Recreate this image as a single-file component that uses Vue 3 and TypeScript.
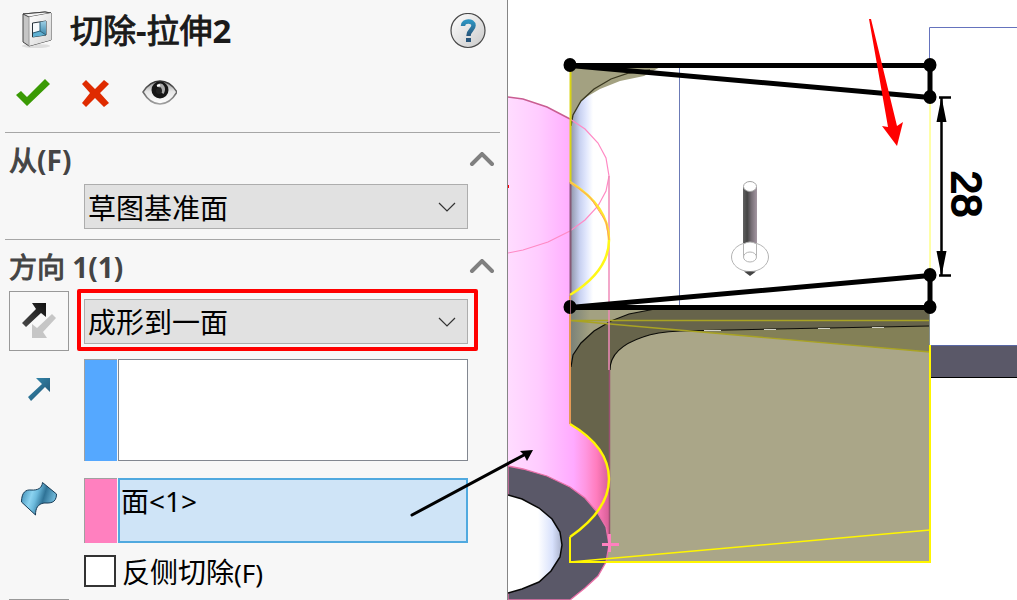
<script setup lang="ts">
import { ref } from 'vue'

interface SketchPoint {
  x: number
  y: number
}

const startCondition = ref('草图基准面')
const endCondition = ref('成形到一面')
const direction = ref('')
const face = ref('面<1>')
const flipSide = ref(false)
const fromOpen = ref(true)
const directionOpen = ref(true)

const points: SketchPoint[] = [
  { x: 570, y: 65 },
  { x: 930, y: 65 },
  { x: 930, y: 97 },
  { x: 930, y: 275 },
  { x: 930, y: 307 },
  { x: 570, y: 307 },
]
</script>

<template>
  <div class="app">
    <aside class="panel">
      <header class="head">
        <svg class="feature-icon" viewBox="0 0 36 42" aria-hidden="true">
          <defs>
            <linearGradient id="cutFront" x1="0" y1="0" x2="1" y2="1">
              <stop offset="0" stop-color="#ffffff" />
              <stop offset="1" stop-color="#d4d4d4" />
            </linearGradient>
            <linearGradient id="cutHole" x1="0" y1="0" x2="0" y2="1">
              <stop offset="0" stop-color="#9ed0e6" />
              <stop offset="1" stop-color="#3a86aa" />
            </linearGradient>
          </defs>
          <ellipse cx="18" cy="36" rx="14" ry="2" fill="#dedede" />
          <path d="M5 4 L27 2 L33 3 V30 L11 36 L5 32 Z" fill="#c6c6c6" stroke="#444444" stroke-linejoin="round" />
          <path d="M5 4 L27 2 L33 3 L11 7 Z" fill="#f4f4f4" stroke="#444444" stroke-linejoin="round" />
          <path d="M11 7 L33 3 V30 L11 36 Z" fill="url(#cutFront)" />
          <path d="M11 7 V36" stroke="#9a9a9a" />
          <path d="M14.500 13 L28 11 V25 L14.500 27 Z" fill="#f5f9fb" stroke="#26323a" />
          <path d="M22 12 L28 11 V25 L22 21 Z" fill="url(#cutHole)" />
          <path d="M15 23 L22 21 L28 25 L15 27 Z" fill="#5fb0d2" />
          <path d="M22 12 V21 L28 25 M22 21 L15 23" fill="none" stroke="#275b75" />
        </svg>
        <h1><span class="han">切除</span>-<span class="han">拉伸</span>2</h1>
        <button class="plain help" type="button" aria-label="帮助">
          <svg viewBox="0 0 36 36" aria-hidden="true">
            <defs>
              <linearGradient id="helpDisc" x1="0" y1="0" x2="1" y2="1">
                <stop offset="0" stop-color="#ffffff" />
                <stop offset="1" stop-color="#c9c9c9" />
              </linearGradient>
              <linearGradient id="helpMark" x1="0" y1="0" x2="0" y2="1">
                <stop offset="0" stop-color="#2d92bf" />
                <stop offset="1" stop-color="#28557a" />
              </linearGradient>
            </defs>
            <circle cx="18" cy="17.500" r="17" fill="url(#helpDisc)" stroke="#484848" stroke-width="1.200" />
            <path d="M13 13 C13 7 23.500 7 23.500 12.500 C23.500 17 18.500 17 18.500 23" fill="none" stroke="url(#helpMark)" stroke-width="4.500" />
            <rect x="16" y="25" width="5" height="4" fill="#28557a" />
          </svg>
        </button>
      </header>

      <div class="actions">
        <button class="plain" type="button" aria-label="确定">
          <svg viewBox="0 0 36 36" aria-hidden="true">
            <path d="M1 20 L6 16 L12 22 L30 4 L35 9 L12 31 Z" fill="#3a9a04" />
          </svg>
        </button>
        <button class="plain" type="button" aria-label="取消">
          <svg viewBox="0 0 36 36" aria-hidden="true">
            <path d="M4 9 L8 5 L17 14 L26 5 L31 9 L22 18 L31 28 L26 32 L17 23 L8 32 L4 28 L12 18 Z" fill="#df2b00" />
          </svg>
        </button>
        <button class="plain" type="button" aria-label="预览">
          <svg viewBox="0 0 36 36" aria-hidden="true">
            <defs>
              <linearGradient id="eyeWhite" x1="0" y1="0" x2="0" y2="1">
                <stop offset="0" stop-color="#8a8a8a" />
                <stop offset="0.45" stop-color="#e6e6e6" />
                <stop offset="1" stop-color="#ffffff" />
              </linearGradient>
              <linearGradient id="eyeRim" x1="0" y1="0" x2="0" y2="1">
                <stop offset="0" stop-color="#333333" />
                <stop offset="1" stop-color="#a0a0a0" />
              </linearGradient>
            </defs>
            <path d="M2 17 Q9 6 19 6 Q29 6 36 17 Q29 29 19 29 Q9 29 2 17 Z" fill="url(#eyeWhite)" stroke="url(#eyeRim)" stroke-width="1.500" />
            <circle cx="19" cy="15" r="8.500" fill="#161616" />
            <path d="M17 11 C21 9 24 13 21 18" fill="none" stroke="#a8a8a8" stroke-width="3.500" />
            <circle cx="18" cy="16" r="3" fill="#222222" />
            <path d="M16 11 L19 10" stroke="#ffffff" stroke-width="2" />
          </svg>
        </button>
      </div>

      <section class="group">
        <div class="group-head">
          <h2><span class="han">从</span>(F)</h2>
          <button class="plain fold" type="button" aria-label="折叠 从" @click="fromOpen = !fromOpen">
            <svg viewBox="0 0 26 16" aria-hidden="true">
              <path d="M3 12 L13 2 L23 12" fill="none" stroke="#808080" stroke-width="4" stroke-linecap="round" />
            </svg>
          </button>
        </div>
        <div v-if="fromOpen" class="row">
          <div class="combo">
            <select v-model="startCondition" aria-label="起始条件">
              <option>草图基准面</option>
            </select>
            <svg class="caret" viewBox="0 0 18 10" aria-hidden="true">
              <path d="M1 1 L9 9 L17 1" fill="none" stroke="#333333" stroke-width="1.200" />
            </svg>
          </div>
        </div>
      </section>

      <section class="group">
        <div class="group-head">
          <h2><span class="han">方向</span> 1(1)</h2>
          <button class="plain fold" type="button" aria-label="折叠 方向 1" @click="directionOpen = !directionOpen">
            <svg viewBox="0 0 26 16" aria-hidden="true">
              <path d="M3 12 L13 2 L23 12" fill="none" stroke="#808080" stroke-width="4" stroke-linecap="round" />
            </svg>
          </button>
        </div>
        <div v-if="directionOpen" class="fields">
          <div class="row">
            <button class="reverse" type="button" aria-label="反向">
              <svg viewBox="0 0 40 40" aria-hidden="true">
                <defs>
                  <linearGradient id="revDark" x1="0" y1="1" x2="1" y2="0">
                    <stop offset="0" stop-color="#4b4b4b" />
                    <stop offset="1" stop-color="#111111" />
                  </linearGradient>
                </defs>
                <path d="M3 22 L17 8 L13 2 H27 V16 L22 12 L7 26 Z" fill="url(#revDark)" />
                <path d="M33 13 L37 17 L24 31 L28 37 H13 V23 L18 27 Z" fill="#c6c6c6" />
              </svg>
            </button>
            <div class="combo marked">
              <select v-model="endCondition" aria-label="终止条件">
                <option>成形到一面</option>
              </select>
              <svg class="caret" viewBox="0 0 18 10" aria-hidden="true">
                <path d="M1 1 L9 9 L17 1" fill="none" stroke="#333333" stroke-width="1.200" />
              </svg>
            </div>
          </div>

          <div class="row top">
            <label class="lead" for="direction" aria-label="拉伸方向">
              <svg viewBox="0 0 60 60" aria-hidden="true">
                <defs>
                  <linearGradient id="dirBlue" x1="0" y1="0" x2="1" y2="1">
                    <stop offset="0" stop-color="#3690b6" />
                    <stop offset="1" stop-color="#214f6d" />
                  </linearGradient>
                </defs>
                <path d="M19 38 L33 25 L27 19 H41 V33 L36 28 L22 42 Z" fill="url(#dirBlue)" />
              </svg>
            </label>
            <div class="picker">
              <span class="swatch blue"></span>
              <textarea id="direction" v-model="direction" class="tall"></textarea>
            </div>
          </div>

          <div class="row top">
            <label class="lead" for="face" aria-label="面/平面">
              <svg viewBox="0 0 60 60" aria-hidden="true">
                <defs>
                  <linearGradient id="surfBlue" gradientUnits="userSpaceOnUse" x1="14" y1="16" x2="46" y2="26">
                    <stop offset="0" stop-color="#4f9cc2" />
                    <stop offset="0.25" stop-color="#8cd3f0" />
                    <stop offset="0.4" stop-color="#6dbbdd" />
                    <stop offset="0.62" stop-color="#2f7397" />
                    <stop offset="1" stop-color="#7cc5e5" />
                  </linearGradient>
                </defs>
                <path d="M33.500 4.500 L47.500 16 C47.500 26 40 25 35 25 C29 26 26.500 30 26.500 37 L12.500 24 C12.500 14 17 11.500 22 12 C29 12.500 33 10 33.500 4.500 Z" fill="url(#surfBlue)" stroke="#173b56" stroke-linejoin="round" />
              </svg>
            </label>
            <div class="picker">
              <span class="swatch pink"></span>
              <textarea id="face" v-model="face" class="active"></textarea>
            </div>
          </div>

          <label class="check">
            <input v-model="flipSide" type="checkbox" />
            <span>反侧切除<span class="key">(F)</span></span>
          </label>

          <button class="reverse draft" type="button" aria-label="拔模开/关"></button>
        </div>
      </section>
    </aside>

    <main class="stage">
      <svg class="model" viewBox="508 0 509 600" preserveAspectRatio="xMinYMin meet" role="img" aria-label="模型视图">
        <defs>
          <linearGradient id="pinkBody" gradientUnits="userSpaceOnUse" x1="508" y1="0" x2="609" y2="0">
            <stop offset="0" stop-color="#ffdcff" />
            <stop offset="0.3" stop-color="#ffccff" />
            <stop offset="0.65" stop-color="#ffaaff" />
            <stop offset="0.77" stop-color="#ff96e0" />
            <stop offset="0.88" stop-color="#ff7cbd" />
            <stop offset="1" stop-color="#d85e96" />
          </linearGradient>
          <linearGradient id="fillet" gradientUnits="userSpaceOnUse" x1="571" y1="0" x2="593" y2="0">
            <stop offset="0" stop-color="#9298ad" />
            <stop offset="0.4" stop-color="#c8d1f1" />
            <stop offset="0.7" stop-color="#e2e8fd" />
            <stop offset="1" stop-color="#ffffff" />
          </linearGradient>
          <linearGradient id="filletShade" gradientUnits="userSpaceOnUse" x1="571" y1="0" x2="590" y2="0">
            <stop offset="0" stop-color="#7b8278" />
            <stop offset="1" stop-color="#a3a181" />
          </linearGradient>
          <linearGradient id="bore" gradientUnits="userSpaceOnUse" x1="538" y1="0" x2="562" y2="0">
            <stop offset="0" stop-color="#ffffff" />
            <stop offset="0.6" stop-color="#d8e1fc" />
            <stop offset="1" stop-color="#a8b0ca" />
          </linearGradient>
          <linearGradient id="pin" x1="0" y1="0" x2="1" y2="0">
            <stop offset="0" stop-color="#626262" />
            <stop offset="0.3" stop-color="#444444" />
            <stop offset="0.6" stop-color="#766e75" />
            <stop offset="1" stop-color="#a497a2" />
          </linearGradient>
        </defs>

        <!-- fillet and upper corner -->
        <rect x="571" y="70" width="23" height="238" fill="url(#fillet)" />
        <path d="M570 66 H662 L644 76 L620 81 L600 89 L588 96 L581 101 L573 115 L571 126 Z" fill="#a3a181" />
        <path d="M571 126 L573 115 L581 101 L594 89 L611 79 L629 73 L650 70" fill="none" stroke="#39371f" stroke-width="1.300" />
        <path d="M679.500 68 V305" stroke="#6b7ab6" />

        <!-- solid body -->
        <path d="M570 308 H930 V562 H570 Z" fill="#aaa688" />
        <path d="M570 309 H655 L629 314 L611 321 L594 331 L581 343 L573 355 L571 367 Z" fill="url(#filletShade)" />
        <path d="M571 485 V367 L573 355 L581 343 L594 331 L611 321 L629 314 L655 309 H930 V326 L775 329 L680 331 Q656 332 643 337 Q610 348 610 370 V485 Z" fill="#67644b" />
        <path d="M680 331 L775 329 L930 326 V352 L680 330 Z" fill="#838057" />
        <path d="M571 367 L573 355 L581 343 L594 331 L611 321 L629 314 L655 309 M610 370 Q610 348 643 337 Q656 332 680 331 L775 329 L930 326" fill="none" stroke="#0c0c08" stroke-width="1.200" />
        <path d="M704 330.500 H721 M764 329.500 H776 M818 328.500 H830 M872 327.500 H884" stroke="#d0d0c4" />
        <path d="M570 320.500 H930 M570 320.500 L930 352" fill="none" stroke="#a9a323" stroke-width="1.300" />

        <!-- side plate and outline behind -->
        <rect x="931" y="346" width="90" height="31" fill="#5a5868" />
        <path d="M931 345.500 H1020" stroke="#5967a4" />
        <path d="M931 377.500 H1020" stroke="#000000" />
        <path d="M929.500 65 V27.500 H1020" fill="none" stroke="#6573bd" />
        <path d="M929.500 310 V346" stroke="#87918e" />

        <!-- selected cylinder face -->
        <path d="M508 97 L523 99 L547 107 L570 119 V424 Q609 447 609 479 V545 L606 562 H508 Z" fill="url(#pinkBody)" />
        <path d="M508 97 L523 99 L547 107 L570 119" fill="none" stroke="#c95d92" stroke-width="1.500" />
        <path d="M570 562 H611 V600 H570 Z" fill="#ffffff" />
        <path d="M508 466 L523 469 L547 476 L570 487 L585 498 L597 512 L606 527 L609 545 L606 562 L598 576 L585 588 L570 600 H508 Z" fill="#5a5868" stroke="#ea70a9" stroke-width="1.300" />
        <path d="M508 495 L522 499 L539 508 L552 519 L560 532 L562 545 L560 557 L551 571 L539 582 L522 589 L508 593" fill="url(#bore)" stroke="#080808" stroke-width="1.500" />
        <path d="M570 119 L585 129 L598 143 L606 158 L609 176 L606 191 L598 206 L585 220 L570 231 L548 242 L523 250 L508 253" fill="none" stroke="#ff8ac4" stroke-width="1.200" />
        <path d="M609 176 V370" stroke="#ef8bb8" stroke-width="1.500" />
        <path d="M609.500 370 V545" stroke="#995070" stroke-width="1.500" />
        <rect x="508" y="185" width="1" height="3" fill="#ff0000" />

        <!-- preview outline -->
        <path d="M570.500 66 V182" stroke="#d9d414" stroke-width="2" />
        <path d="M570.500 182 V296" stroke="#865976" stroke-width="2" />
        <path d="M570 296 V424" stroke="#e69a56" stroke-width="2" />
        <path d="M570 182 Q609 206 609 240" fill="none" stroke="#ffe62a" stroke-width="2.500" />
        <path d="M570 182 L590 197 L606 222 L609 240" fill="none" stroke="#ff9f60" />
        <path d="M609 240 Q609 271 570 295" fill="none" stroke="#fff817" stroke-width="2.500" />
        <path d="M570 424 Q609 447 609 479 Q609 510 570 537" fill="none" stroke="#fff600" stroke-width="2.500" />
        <path d="M570 537 V562 H930 V345" fill="none" stroke="#fff600" stroke-width="2" />
        <path d="M570 562 L930 530" stroke="#fff600" stroke-width="1.500" />
        <path d="M930 97 V275" stroke="#ffff50" />
        <path d="M602 544.500 H619 M609.500 534 V552" stroke="#ff80bf" stroke-width="3" />

        <!-- direction handle -->
        <ellipse cx="750" cy="257" rx="18.500" ry="14.500" fill="#ffffff" stroke="#b4b4b4" />
        <rect x="743" y="187" width="14" height="56" fill="url(#pin)" />
        <ellipse cx="750" cy="186.500" rx="6.500" ry="5" fill="#ffffff" stroke="#a4a4a4" />
        <path d="M743.500 257 V244 Q750 240 756.500 244 V257" fill="#ffffff" stroke="#b4b4b4" />
        <ellipse cx="750" cy="257" rx="6.500" ry="5" fill="#ffffff" stroke="#b4b4b4" />
        <path d="M744 271.500 H756 L750 276 Z" fill="#444444" />

        <!-- sketch -->
        <path d="M930 65.500 H570 L930 97.500 Z M930 307.500 H570 L930 275.500 Z" fill="none" stroke="#000000" stroke-width="5" stroke-linejoin="round" />
        <ellipse v-for="(p, i) in points" :key="i" :cx="p.x" :cy="p.y" rx="6.500" ry="7" fill="#000000" />
        <path d="M570.500 300 V314" stroke="#8f5c70" />

        <!-- dimension -->
        <path d="M939 97.500 H951 M939 275.500 H951 M941.500 98 V275" stroke="#000000" stroke-width="2.500" />
        <path d="M941.500 97 L946.500 122 H936.500 Z M941.500 276 L946.500 251 H936.500 Z" fill="#000000" />
        <text class="dimension" text-anchor="middle" transform="translate(952 194) rotate(90)">28</text>

        <path d="M869 19 H871 L897 126 L903 122 L897 146 L882 126 L888 127 Z" fill="#ff0000" />
      </svg>
    </main>

    <svg class="pointer" viewBox="0 0 126 70" aria-hidden="true">
      <path d="M3 67 L115 7" stroke="#000000" stroke-width="3" stroke-linecap="round" />
      <path d="M124 2 L111 3 L115 7 L118 13 Z" fill="#000000" />
    </svg>
  </div>
</template>

<style>
body {
  margin: 0;
  background: #ffffff;
}
</style>

<style scoped>
* {
  box-sizing: border-box;
}

.app {
  position: relative;
  display: grid;
  grid-template-columns: 508px minmax(0, 1fr);
  height: 100vh;
  overflow: hidden;
  background: #ffffff;
  color: #000000;
  font-family: "Noto Sans", "Noto Sans CJK SC", sans-serif;
  font-size: 28px;
}

.panel {
  padding: 0 7px 0 5px;
  overflow: hidden;
  background: #f7f7f7;
  border-right: 1px solid #858585;
}

button,
select,
textarea {
  font: inherit;
  color: inherit;
}

svg {
  display: block;
}

.plain {
  flex: none;
  padding: 0;
  border: 0;
  background: none;
}

.head {
  display: flex;
  align-items: center;
  height: 62px;
  padding: 0 14px 0 13px;
}

.feature-icon {
  width: 36px;
  height: 42px;
}

h1,
h2 {
  margin: 0;
  font-weight: 700;
  white-space: nowrap;
}

.han {
  font-weight: 400;
  -webkit-text-stroke: 1px currentColor;
}

h1 {
  flex: 1;
  margin-left: 16px;
  color: #1a1a1a;
  font-size: 33px;
  line-height: 48px;
}

.help svg,
.actions svg {
  width: 36px;
  height: 36px;
}

.actions {
  display: flex;
  align-items: center;
  gap: 27px;
  height: 70px;
  padding: 0 10px 8px;
}

.group {
  border-top: 1px solid #a6a6a6;
  padding-bottom: 10px;
}

.group-head {
  display: flex;
  align-items: center;
  justify-content: space-between;
  height: 51px;
  padding: 2px 5px 0 4px;
}

h2 {
  color: #444444;
  font-size: 28px;
  line-height: 44px;
}

.fold svg {
  width: 26px;
  height: 16px;
}

.fields {
  display: flex;
  flex-direction: column;
}

.row {
  display: flex;
  align-items: center;
  padding: 0 32px 0 4px;
}

.row.top {
  align-items: flex-start;
  margin-top: 8px;
}

.row.top + .row.top {
  margin-top: 17px;
}

.combo {
  position: relative;
  flex: 1;
  margin-left: 15px;
}

.row > .combo:first-child {
  margin-left: 75px;
}

.combo select {
  display: block;
  width: 100%;
  height: 45px;
  padding: 2px 40px 0 3px;
  appearance: none;
  background: #e1e1e1;
  border: 1px solid #adadad;
  border-radius: 0;
}

.caret {
  position: absolute;
  top: 18px;
  right: 12px;
  width: 18px;
  height: 10px;
  pointer-events: none;
}

.marked::after {
  content: "";
  position: absolute;
  inset: -10px -10px -7px -7px;
  border: 4px solid #ff0000;
  border-radius: 2px;
  pointer-events: none;
}

.reverse {
  display: flex;
  flex: none;
  align-items: center;
  justify-content: center;
  width: 60px;
  height: 60px;
  padding: 0;
  background: #f8f8f8;
  border: 1px solid #999999;
}

.reverse svg {
  width: 40px;
  height: 40px;
}

.draft {
  margin: 6px 0 0 4px;
}

.lead {
  flex: none;
  width: 60px;
}

.lead svg {
  width: 60px;
  height: 60px;
}

.picker {
  display: flex;
  flex: 1;
  gap: 1px;
  margin-left: 15px;
}

.swatch {
  flex: none;
  width: 33px;
  border-top: 1px solid #a0a0a0;
  border-left: 1px solid #a0a0a0;
}

.blue {
  background: #55a8ff;
}

.pink {
  background: #ff80bf;
}

textarea {
  display: block;
  flex: 1;
  min-width: 0;
  height: 65px;
  margin: 0;
  padding: 0 1px;
  line-height: 42px;
  resize: none;
  overflow: hidden;
  background: #ffffff;
  border: 1px solid #828790;
  border-radius: 0;
}

.tall {
  height: 102px;
}

.active {
  background: #cfe4f7;
  border: 2px solid #50a9df;
}

.check {
  display: flex;
  align-items: center;
  gap: 6px;
  height: 44px;
  margin: 6px 0 0 79px;
}

.check input {
  width: 32px;
  height: 32px;
  margin: 0;
  appearance: none;
  background: #ffffff;
  border: 2px solid #333333;
}

.check input:checked {
  background: #333333;
}

.key {
  font-size: 26px;
}

.stage {
  min-width: 0;
}

.model {
  width: 100%;
  height: auto;
}

.dimension {
  font-family: "Liberation Sans", sans-serif;
  font-size: 42px;
  stroke: #000000;
  stroke-width: 2px;
}

.pointer {
  position: absolute;
  top: 448px;
  left: 409px;
  width: 126px;
  height: 70px;
  pointer-events: none;
}
</style>
